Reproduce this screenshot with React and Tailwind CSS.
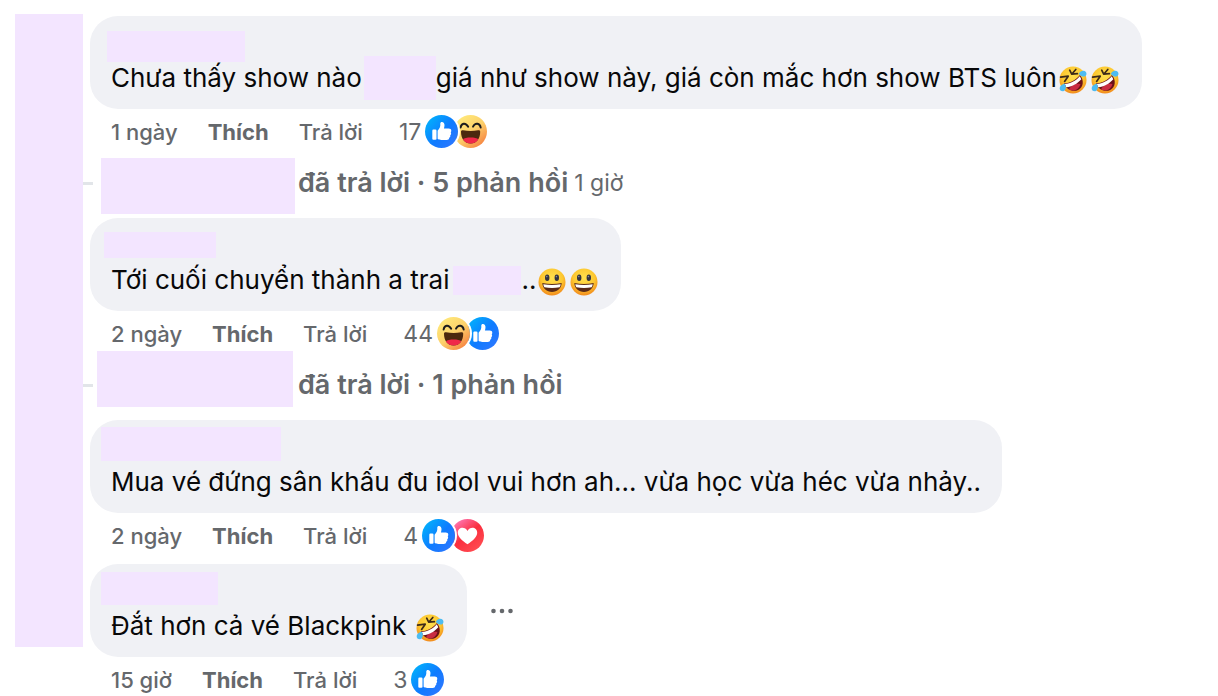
// src/components/CommentThread.jsx

const COMMENTS = [
  {
    id: 1,
    nameMask: "mt-[15px] ml-[17px] h-[31px] w-[138px]",
    content: (
      <>
        Chưa thấy show nào
        <span className="-my-2 ml-0.5 h-11 w-[72px] bg-[#f3e5ff]" />
        giá như show này, giá còn mắc hơn show BTS luôn
        <RoflEmoji />
        <RoflEmoji />
      </>
    ),
    time: "1 ngày",
    count: 17,
    reactions: ["like", "haha"],
    reply: {
      mask: "ml-2 mt-1.5 mr-[3px] h-14 w-[194px]",
      text: "đã trả lời · 5 phản hồi",
      time: "1 giờ",
    },
  },
  {
    id: 2,
    nameMask: "mt-[14px] ml-[14px] h-[26px] w-28",
    content: (
      <>
        Tới cuối chuyển thành a trai
        <span className="ml-1 h-[29px] w-[68px] bg-[#f3e5ff]" />
        ..
        <SmileEmoji />
        <SmileEmoji />
      </>
    ),
    time: "2 ngày",
    count: 44,
    reactions: ["haha", "like"],
    reply: {
      mask: "ml-1 mb-3 mr-[5px] h-14 w-[196px]",
      text: "đã trả lời · 1 phản hồi",
    },
  },
  {
    id: 3,
    nameMask: "mt-[7px] ml-[11px] h-[34px] w-[180px]",
    content: "Mua vé đứng sân khấu đu idol vui hơn ah... vừa học vừa héc vừa nhảy..",
    time: "2 ngày",
    count: 4,
    reactions: ["like", "love"],
  },
  {
    id: 4,
    nameMask: "mt-2 ml-[11px] h-[33px] w-[117px]",
    content: (
      <>
        Đắt hơn cả vé Blackpink
        <span className="w-2" />
        <RoflEmoji />
      </>
    ),
    time: "15 giờ",
    count: 3,
    reactions: ["like"],
    menu: true,
  },
];

export default function CommentThread() {
  return (
    <main className="flex w-full overflow-hidden bg-white pl-[15px] font-['Inter','Liberation_Sans',sans-serif]">
      <div className="mt-[14px] mb-[49px] w-[68px] shrink-0 bg-[#f3e5ff]" />

      <section className="min-w-0 flex-1 pt-4">
        {COMMENTS.map((comment) => (
          <Comment key={comment.id} {...comment} />
        ))}
      </section>

      <Gradients />
    </main>
  );
}

/* ============ COMMENT ============ */

function Comment({ nameMask, content, time, count, reactions, reply, menu }) {
  return (
    <article className={reply ? "" : "mb-3 last:mb-0"}>
      <div className="flex items-center gap-5 pl-[7px]">
        <div className="h-[93px] rounded-[28px] bg-[#f0f1f5]">
          <div className="flex h-[45px] items-start">
            <div className={`bg-[#f3e5ff] ${nameMask}`} />
          </div>
          <div className="flex h-[34px] items-center px-[21px] text-[26px] leading-[34px] whitespace-nowrap text-[#080809]">
            {content}
          </div>
        </div>
        {menu && (
          <button type="button" aria-label="Tùy chọn khác" className="p-1">
            <svg width="22" height="6" viewBox="0 0 22 6" fill="#65686c">
              <circle cx="2.5" cy="3" r="2.3" />
              <circle cx="11" cy="3" r="2.3" />
              <circle cx="19.5" cy="3" r="2.3" />
            </svg>
          </button>
        )}
      </div>

      {/* meta */}
      <div className="flex h-[39px] items-center pt-1.5 pl-7 text-[22px] leading-7 whitespace-nowrap text-[#65686c]">
        <span className="font-medium">{time}</span>
        <button type="button" className="ml-[30px] font-bold">
          Thích
        </button>
        <button type="button" className="ml-[30px] font-medium">
          Trả lời
        </button>
        <span className="mr-1 ml-9 text-[23px]">{count}</span>
        <span className="flex">
          {reactions.map((type, i) => (
            <Reaction key={type} type={type} first={i === 0} />
          ))}
        </span>
      </div>

      {reply && (
        <div className="flex h-[70px] items-center whitespace-nowrap text-[#65686c]">
          <span className="h-[3px] w-2.5 bg-[#e2e5e9]" />
          <span className={`bg-[#f3e5ff] ${reply.mask}`} />
          <button type="button" className="text-[27px] leading-8 font-semibold">
            {reply.text}
          </button>
          {reply.time && <span className="ml-1.5 text-[23px]">{reply.time}</span>}
        </div>
      )}
    </article>
  );
}

/* ============ REACTIONS ============ */

function Reaction({ type, first }) {
  return (
    <span
      className={
        first ? "relative z-10 rounded-full ring-2 ring-white" : "-ml-1"
      }
    >
      <svg width="33" height="33" viewBox="0 0 33 33" className="block">
        {type === "like" && (
          <>
            <circle cx="16.5" cy="16.5" r="16.5" fill="url(#likeBg)" />
            <rect x="7.3" y="14.6" width="4.2" height="10.2" rx="1.1" fill="#fff" />
            <path
              d="M12.6 15.8C13 14.6 15.3 13 15.3 10.4V8.6C15.3 7.500 15.900 6.900 16.900 6.900C18.600 6.900 19.500 8.300 19.500 10.100C19.500 11.500 19.200 12.600 18.900 13.600H23.700C25.300 13.600 26.300 14.500 26.300 15.700C26.300 16.400 26 16.900 25.700 17.300C26.100 17.700 26.200 18.200 26.100 18.700C26 19.400 25.700 19.900 25.200 20.200C25.400 20.600 25.400 21 25.300 21.400C25.100 22 24.700 22.500 24.200 22.700C24.200 24.200 23.200 24.900 21.700 24.900H16.400C14.700 24.900 13.500 24.500 12.600 23.700Z"
              fill="#fff"
            />
          </>
        )}
        {type === "haha" && (
          <>
            <circle cx="16.5" cy="16.5" r="16.5" fill="url(#hahaBg)" />
            <path
              d="M6.600 12.600C7.200 8.200 11.500 7 14.200 11.700M19 11.700C21.300 7 26 8.200 26.700 12.600"
              fill="none"
              stroke="#1c1c1d"
              strokeWidth="1.9"
              strokeLinecap="round"
            />
            <path
              d="M7 16.800C7 15.600 7.800 15.100 9 15.300C14 16.200 19.200 16.200 24.200 15.300C25.400 15.100 26.200 15.600 26.200 16.800C26.200 23.600 22.500 28.600 16.600 28.600S7 23.600 7 16.800Z"
              fill="#4b280e"
            />
            <path
              d="M8.900 24.200C11 21.800 22.200 21.800 24.300 24.200C22.600 27.100 19.900 28.600 16.600 28.600S10.600 27.100 8.900 24.200Z"
              fill="#f02849"
            />
          </>
        )}
        {type === "love" && (
          <>
            <circle cx="16.5" cy="16.5" r="16.5" fill="url(#loveBg)" />
            <path
              d="M16.500 25.300C11.200 21.500 6.800 18 6.800 13.700c0-5.600 7.200-6.700 9.700-1.700 2.500-5 9.700-3.900 9.700 1.700 0 4.300-4.400 7.800-9.700 11.600z"
              fill="#fff"
            />
          </>
        )}
      </svg>
    </span>
  );
}

/* ============ EMOJI ============ */

function RoflEmoji() {
  return (
    <svg width="32" height="28" viewBox="0 0 32 28" className="mt-1 shrink-0">
      <circle cx="16" cy="14" r="13.5" fill="url(#emojiBg)" />
      <path
        d="M6.800 17.300C13 17 19.300 13.700 22.900 8.900C27.300 14 26.600 21.200 21.200 23.900C15.900 26.500 9 23.700 6.800 17.300Z"
        fill="#6b1218"
      />
      <path
        d="M12 23.400C13.600 19.300 18.600 16.700 23.400 18.100C22 24 16.600 26 12 23.400Z"
        fill="#c92c42"
      />
      <path
        d="M7.800 18C13.500 17.700 19.400 14.600 22.800 10.300L24.300 13.200C20.600 17.700 14.600 20.900 9.200 21.300Z"
        fill="#fff"
      />
      <path
        d="M3.600 11.200L11.200 10.200L7.600 15.400M12.700 4.200L14.700 8.200L20.400 7.700M14.700 8.200L18.800 3.500"
        fill="none"
        stroke="#3d2a19"
        strokeWidth="1.7"
        strokeLinecap="round"
        strokeLinejoin="round"
      />
      <path
        d="M21.800 7.900C23.200 4.600 27.200 3.900 28.900 6C30.200 7.800 29.200 10.300 27 10.600C24.900 10.800 23.500 9.600 21.800 7.900Z"
        fill="#4dbcf2"
      />
      <path
        d="M7.600 17.600C9.400 20.300 9.300 23.800 6.900 25C4.800 25.900 2.300 24.300 2.700 21.900C3.100 19.700 5.300 18.600 7.600 17.600Z"
        fill="#4dbcf2"
      />
    </svg>
  );
}

function SmileEmoji() {
  return (
    <svg width="32" height="28" viewBox="0 0 32 28" className="mt-1 shrink-0">
      <circle cx="16" cy="14" r="13.5" fill="url(#emojiBg)" />
      <ellipse cx="11.200" cy="9.800" rx="2.200" ry="3.300" fill="#34343f" />
      <ellipse cx="20.800" cy="9.800" rx="2.200" ry="3.300" fill="#34343f" />
      <circle cx="10.800" cy="8.600" r=".8" fill="#8b8b98" />
      <circle cx="20.400" cy="8.600" r=".8" fill="#8b8b98" />
      <path
        d="M6.300 15C12.500 16.200 19.500 16.200 25.700 15C25.400 20.300 21.200 23.900 16 23.900S6.600 20.300 6.300 15Z"
        fill="#5a2a18"
      />
      <path
        d="M7.300 16.200C13 17.200 19 17.200 24.700 16.200C24.500 17.500 24.200 18.400 23.600 19.300C18.600 20.200 13.400 20.200 8.400 19.300C7.800 18.400 7.500 17.500 7.300 16.200Z"
        fill="#fff"
      />
    </svg>
  );
}

// shared fills for the reactions and emoji
function Gradients() {
  return (
    <svg width="0" height="0" className="shrink-0" aria-hidden="true">
      <defs>
        <linearGradient id="likeBg" x1="0.1" y1="0.15" x2="0.9" y2="0.85">
          <stop offset="0" stopColor="#02adfc" />
          <stop offset="0.55" stopColor="#0f7bff" />
          <stop offset="1" stopColor="#2b78ff" />
        </linearGradient>
        <linearGradient id="hahaBg" x1="0.15" y1="0.1" x2="0.85" y2="0.95">
          <stop offset="0" stopColor="#ffe879" />
          <stop offset="0.5" stopColor="#fcd06b" />
          <stop offset="1" stopColor="#f6803f" />
        </linearGradient>
        <linearGradient id="loveBg" x1="0.15" y1="0.1" x2="0.8" y2="0.9">
          <stop offset="0" stopColor="#ff74ae" />
          <stop offset="0.5" stopColor="#fa2e3e" />
          <stop offset="1" stopColor="#ff4a50" />
        </linearGradient>
        <radialGradient id="emojiBg" cx="0.5" cy="0.35" r="0.65">
          <stop offset="0" stopColor="#ffe04f" />
          <stop offset="0.6" stopColor="#fdc830" />
          <stop offset="1" stopColor="#f28a1c" />
        </radialGradient>
      </defs>
    </svg>
  );
}
